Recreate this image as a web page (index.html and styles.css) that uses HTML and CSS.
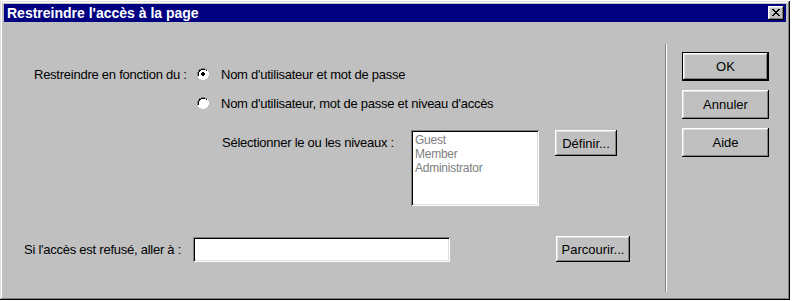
FILE: index.html
```html
<!DOCTYPE html>
<html lang="fr">
<head>
<meta charset="utf-8">
<title>Restreindre l'accès à la page</title>
<link rel="stylesheet" href="styles.css">
</head>
<body>
<div class="dialog">
  <div class="titlebar">
    <span class="title">Restreindre l'accès à la page</span>
    <span class="close"><svg width="8" height="7" viewBox="0 0 8 7"><path d="M0 0h2v1h1v1h2V1h1V0h2v1H7v1H6v1H5v1h1v1h1v1h1v1H6V6H5V5H3v1H2v1H0V6h1V5h1V4h1V3H2V2H1V1H0z" fill="#000"/></svg></span>
  </div>
  <div class="main">
    <div class="left">
      <div class="row row-radio1">
        <span class="lbl lbl-restrict">Restreindre en fonction du :</span>
        <span class="radio checked"><svg width="12" height="12" viewBox="0 0 12 12"><path d="M4 0h4v1h2v1h1v2h1v4h-1v2h-1v1H8v1H4v-1H2v-1H1V8H0V4h1V2h1V1h2z" fill="#fff"/><path d="M4 0h4v1h2v1H8V1H4v1H2v2H1v4H0V4h1V2h1V1h2z" fill="#808080"/><path d="M4 1h4v1h2v1H9V2H8V2H4v1H3v1H2v4H1V4h1V2h2z" fill="#000"/><path d="M10 2h1v2h1v4h-1v2h-1v1H8v1H4v-1h4v-1h2V8h1V4h-1z" fill="#fff"/><path d="M4 2h4v1h1v1h1v4H9v1H8v1H4V9H3V8H2V4h1V3h1z" fill="#fff"/><path d="M5 4h2v1h1v2H7v1H5V7H4V5h1z" class="dot"/></svg></span>
        <span class="opt">Nom d'utilisateur et mot de passe</span>
      </div>
      <div class="row row-radio2">
        <span class="radio"><svg width="12" height="12" viewBox="0 0 12 12"><path d="M4 0h4v1h2v1h1v2h1v4h-1v2h-1v1H8v1H4v-1H2v-1H1V8H0V4h1V2h1V1h2z" fill="#fff"/><path d="M4 0h4v1h2v1H8V1H4v1H2v2H1v4H0V4h1V2h1V1h2z" fill="#808080"/><path d="M4 1h4v1h2v1H9V2H8V2H4v1H3v1H2v4H1V4h1V2h2z" fill="#000"/><path d="M10 2h1v2h1v4h-1v2h-1v1H8v1H4v-1h4v-1h2V8h1V4h-1z" fill="#fff"/><path d="M4 2h4v1h1v1h1v4H9v1H8v1H4V9H3V8H2V4h1V3h1z" fill="#fff"/></svg></span>
        <span class="opt">Nom d'utilisateur, mot de passe et niveau d'accès</span>
      </div>
      <div class="row row-levels">
        <span class="lbl lbl-levels">Sélectionner le ou les niveaux :</span>
        <div class="listbox">
          <div class="item">Guest</div>
          <div class="item">Member</div>
          <div class="item">Administrator</div>
        </div>
        <button class="btn btn-define">Définir...</button>
      </div>
      <div class="row row-denied">
        <span class="lbl lbl-denied">Si l'accès est refusé, aller à :</span>
        <div class="textbox"></div>
        <button class="btn btn-browse">Parcourir...</button>
      </div>
    </div>
    <div class="sep"></div>
    <div class="right">
      <button class="btn btn-side btn-default">OK</button>
      <button class="btn btn-side">Annuler</button>
      <button class="btn btn-side">Aide</button>
    </div>
  </div>
</div>
</body>
</html>
```
FILE: styles.css
```css
html, body {
  margin: 0;
  padding: 0;
  background: #ffffff;
}
body {
  font-family: "Liberation Sans", Arial, sans-serif;
  font-size: 13px;
  letter-spacing: -0.25px;
  color: #000;
}
.dialog {
  box-sizing: border-box;
  width: 790px;
  height: 299px;
  margin-top: 1px;
  background: #c0c0c0;
  padding: 3px 4px 4px 4px;
  box-shadow: inset -1px -1px #000, inset 1px 1px #dfdfdf, inset -2px -2px #808080, inset 2px 2px #fff;
  display: flex;
  flex-direction: column;
}
.titlebar {
  height: 18px;
  background: #000080;
  display: flex;
  align-items: center;
  justify-content: space-between;
  padding: 0 2px 0 3px;
}
.title {
  color: #fff;
  font-family: "Liberation Sans", Arial, sans-serif;
  font-weight: bold;
  font-size: 14px;
  letter-spacing: 0;
}
.close {
  box-sizing: border-box;
  width: 16px;
  height: 14px;
  background: #c0c0c0;
  box-shadow: inset -1px -1px #000, inset 1px 1px #fff, inset -2px -2px #808080, inset 2px 2px #dfdfdf;
  display: flex;
  align-items: center;
  justify-content: center;
  padding-bottom: 1px;
}
.main {
  flex: 1;
  display: flex;
}
.left {
  width: 661px;
  display: flex;
  flex-direction: column;
}
.row {
  display: flex;
  align-items: center;
}
.row-radio1 {
  margin-top: 44px;
  height: 16px;
}
.lbl-restrict {
  margin-left: 30px;
  width: 163px;
}
.radio {
  width: 12px;
  height: 12px;
  display: inline-flex;
}
.radio .dot { fill: #000; }
.opt {
  margin-left: 12px;
}
.row-radio2 {
  margin-top: 13px;
  height: 16px;
  padding-left: 193px;
}
.row-levels {
  margin-top: 19px;
  align-items: flex-start;
  padding-left: 218px;
}
.lbl-levels {
  width: 189px;
  padding-top: 5px;
}
.listbox {
  box-sizing: border-box;
  width: 128px;
  height: 76px;
  background: #fff;
  box-shadow: inset 1px 1px #808080, inset -1px -1px #fff, inset 2px 2px #000, inset -2px -2px #dfdfdf;
  padding: 3px 4px;
}
.item {
  color: #808080;
  font-size: 12px;
  line-height: 14px;
}
.btn {
  box-sizing: border-box;
  background: #c0c0c0;
  border: none;
  font: inherit;
  color: #000;
  padding: 0;
  box-shadow: inset -1px -1px #000, inset 1px 1px #fff, inset -2px -2px #808080, inset 2px 2px #dfdfdf;
}
.btn-define {
  margin-left: 16px;
  width: 62px;
  height: 26px;
}
.row-denied {
  margin-top: auto;
  margin-bottom: 34px;
  padding-left: 20px;
}
.lbl-denied {
  width: 169px;
}
.textbox {
  box-sizing: border-box;
  width: 257px;
  height: 25px;
  background: #fff;
  box-shadow: inset 1px 1px #808080, inset -1px -1px #fff, inset 2px 2px #000, inset -2px -2px #dfdfdf;
}
.btn-browse {
  margin-left: 106px;
  width: 74px;
  height: 26px;
}
.sep {
  width: 0;
  border-left: 1px solid #808080;
  border-right: 1px solid #fff;
  margin-top: 22px;
  margin-bottom: 4px;
}
.right {
  display: flex;
  flex-direction: column;
  padding-left: 15px;
  padding-top: 30px;
  gap: 9px;
}
.btn-side {
  width: 87px;
  height: 29px;
}
.btn-default {
  box-shadow: inset 0 0 0 1px #000, inset -2px -2px #000, inset 2px 2px #fff, inset -3px -3px #808080, inset 3px 3px #dfdfdf;
}
```
